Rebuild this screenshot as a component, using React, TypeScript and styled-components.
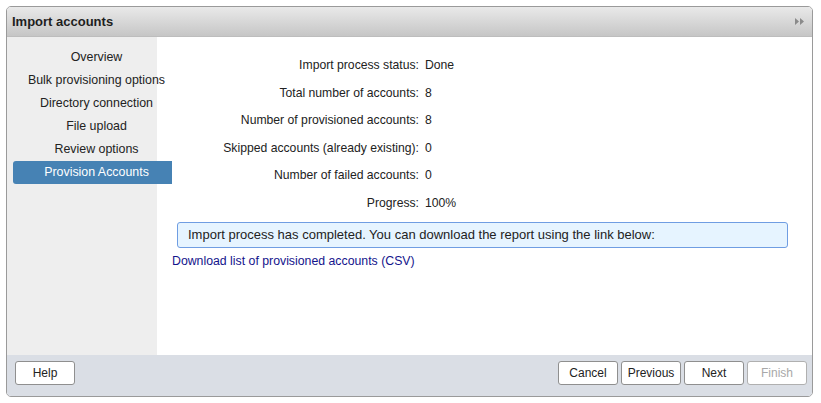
import React from 'react';
import styled, { createGlobalStyle } from 'styled-components';

const GlobalStyle = createGlobalStyle`
  html, body {
    margin: 0;
    padding: 0;
    background: #ffffff;
  }
  body {
    font-family: "Liberation Sans", Arial, sans-serif;
    font-size: 12px;
    color: #222;
  }
`;

const Page = styled.div`
  padding: 6px 8px 6px 6px;
`;

const Dialog = styled.section`
  width: 807px;
  height: 391px;
  border: 1px solid #9a9a9a;
  border-radius: 5px;
  overflow: hidden;
  display: flex;
  flex-direction: column;
  box-sizing: border-box;
`;

const Header = styled.header`
  height: 29px;
  flex: none;
  display: flex;
  align-items: center;
  justify-content: space-between;
  padding: 0 8px 0 5px;
  background: linear-gradient(#e9e9e9, #c6c6c6);
  border-bottom: 1px solid #bdbdbd;
`;

const Title = styled.h1`
  margin: 0;
  font-size: 13px;
  font-weight: bold;
  color: #1e1e1e;
`;

const Body = styled.div`
  flex: 1;
  display: flex;
  min-height: 0;
`;

const Sidebar = styled.nav`
  width: 150px;
  flex: none;
  background: #eeeeee;
  padding-top: 9px;
  display: flex;
  flex-direction: column;
`;

const NavItem = styled.div<{ $active?: boolean }>`
  height: 23px;
  line-height: 22px;
  font-size: 12.4px;
  text-align: center;
  white-space: nowrap;
  margin-left: 6px;
  width: 159px;
  box-sizing: border-box;
  padding-left: 8px;
  border-radius: ${(p) => (p.$active ? '3px 0 0 3px' : '0')};
  background: ${(p) => (p.$active ? '#4682b4' : 'transparent')};
  color: ${(p) => (p.$active ? '#ffffff' : '#222')};
  position: relative;
  z-index: 1;
`;

const Content = styled.main`
  flex: 1;
  padding: 21px 24px 0 15px;
  display: flex;
  flex-direction: column;
`;

const StatusGrid = styled.dl`
  margin: 0;
  display: grid;
  grid-template-columns: 247px 1fr;
  column-gap: 6px;
  row-gap: 13px;
  line-height: 14.6px;
  font-size: 12.2px;

  dt {
    text-align: right;
  }
  dd {
    margin: 0;
  }
`;

const Notice = styled.div`
  margin: 11px 0 0 5px;
  height: 26px;
  box-sizing: border-box;
  border: 1px solid #6f9de2;
  border-radius: 3px;
  background: #e6f4ff;
  padding: 0 10px;
  font-size: 13px;
  display: flex;
  align-items: center;
`;

const DownloadLink = styled.a`
  margin-top: 6px;
  font-size: 12.3px;
  color: #14148c;
  text-decoration: none;
  align-self: flex-start;
`;

const Footer = styled.footer`
  height: 41px;
  flex: none;
  background: #dadee5;
  display: flex;
  align-items: flex-start;
  justify-content: space-between;
  padding: 6px 5px 0 8px;
  box-sizing: border-box;
`;

const ButtonGroup = styled.div`
  display: flex;
  gap: 3px;
`;

const Button = styled.button`
  width: 60px;
  height: 24px;
  font-family: "Liberation Sans", Arial, sans-serif;
  font-size: 12px;
  color: #222;
  background: #ffffff;
  border: 1px solid #8f8f8f;
  border-radius: 3px;
  padding: 0;

  &:disabled {
    color: #a8a8a8;
    border-color: #b0b0b0;
  }
`;

const steps = [
  'Overview',
  'Bulk provisioning options',
  'Directory connection',
  'File upload',
  'Review options',
  'Provision Accounts',
];

const status: [string, string][] = [
  ['Import process status:', 'Done'],
  ['Total number of accounts:', '8'],
  ['Number of provisioned accounts:', '8'],
  ['Skipped accounts (already existing):', '0'],
  ['Number of failed accounts:', '0'],
  ['Progress:', '100%'],
];

const CollapseIcon = () => (
  <svg width="9" height="7" viewBox="0 0 9 7">
    <path d="M0 0 L4 3.5 L0 7 Z M5 0 L9 3.5 L5 7 Z" fill="#8a8a8a" />
  </svg>
);

export default function App() {
  return (
    <Page>
      <GlobalStyle />
      <Dialog>
        <Header>
          <Title>Import accounts</Title>
          <CollapseIcon />
        </Header>
        <Body>
          <Sidebar>
            {steps.map((s, i) => (
              <NavItem key={s} $active={i === steps.length - 1}>
                {s}
              </NavItem>
            ))}
          </Sidebar>
          <Content>
            <StatusGrid>
              {status.map(([label, value]) => (
                <React.Fragment key={label}>
                  <dt>{label}</dt>
                  <dd>{value}</dd>
                </React.Fragment>
              ))}
            </StatusGrid>
            <Notice>
              Import process has completed. You can download the report using the link below:
            </Notice>
            <DownloadLink href="#">Download list of provisioned accounts (CSV)</DownloadLink>
          </Content>
        </Body>
        <Footer>
          <Button>Help</Button>
          <ButtonGroup>
            <Button>Cancel</Button>
            <Button>Previous</Button>
            <Button>Next</Button>
            <Button disabled>Finish</Button>
          </ButtonGroup>
        </Footer>
      </Dialog>
    </Page>
  );
}
